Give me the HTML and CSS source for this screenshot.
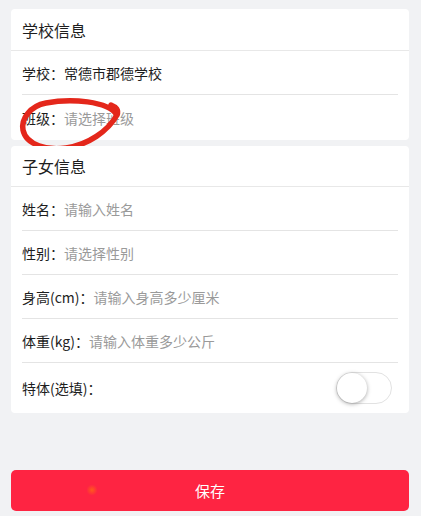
FILE: index.html
```html
<!DOCTYPE html>
<html lang="zh-CN">
<head>
    <meta charset="UTF-8">
    <meta name="viewport" content="width=device-width, initial-scale=1.0">
    <title>学生信息</title>
    <link rel="stylesheet" href="styles.css">
</head>
<body>
    <div class="page">
        <div class="card">
            <div class="card-title">学校信息</div>
            <div class="row">
                <span class="label">学校：</span>
                <span class="value">常德市郡德学校</span>
            </div>
            <div class="row row-tall">
                <span class="label">班级：</span>
                <span class="placeholder">请选择班级</span>
            </div>
            <!-- hand-drawn marker around the class row -->
            <svg class="mark" width="115" height="62" viewBox="0 0 115 62">
                <path d="M101 20 C 92 6, 55 3, 30 8 C 14 11, 5 24, 7 35 C 10 50, 32 56, 50 53 C 72 50, 92 36, 101 20 C 103 15, 100 12, 95 10"
                      fill="none" stroke="#e4271b" stroke-width="5.5" stroke-linecap="round"/>
            </svg>
        </div>

        <div class="card">
            <div class="card-title card-title-sm">子女信息</div>
            <div class="row">
                <span class="label">姓名：</span>
                <span class="placeholder">请输入姓名</span>
            </div>
            <div class="row">
                <span class="label">性别：</span>
                <span class="placeholder">请选择性别</span>
            </div>
            <div class="row">
                <span class="label">身高(cm)：</span>
                <span class="placeholder">请输入身高多少厘米</span>
            </div>
            <div class="row">
                <span class="label">体重(kg)：</span>
                <span class="placeholder">请输入体重多少公斤</span>
            </div>
            <div class="row row-switch">
                <span class="label">特体(选填)：</span>
                <div class="switch"><div class="knob"></div></div>
            </div>
        </div>

        <div class="footer">
            <button class="save-btn">保存<span class="dot"></span></button>
        </div>
    </div>
</body>
</html>
```

FILE: styles.css
```css
body {
    margin: 0;
    font-family: "Noto Sans CJK SC", "Noto Sans", sans-serif;
    background: #f1f2f4;
    color: #333;
}

.page {
    padding: 9px 12px 5px 11px;
    display: flex;
    flex-direction: column;
    gap: 6px;
    height: 516px;
    box-sizing: border-box;
}

.card {
    position: relative;
    background: #fff;
    border-radius: 4px;
}

.card-title {
    height: 41px;
    display: flex;
    align-items: center;
    padding: 0 11px;
    font-size: 16px;
    color: #1e1e1e;
    border-bottom: 1px solid #e8e8e8;
}

.card-title-sm {
    height: 40px;
}

.row {
    height: 43px;
    margin: 0 11px;
    display: flex;
    align-items: center;
    font-size: 14px;
}

.row + .row {
    border-top: 1px solid #e4e4e4;
}

.row-tall {
    height: 45px;
}

.label {
    color: #1e1e1e;
}

.value {
    color: #1e1e1e;
}

.placeholder {
    color: #9a9a9a;
}

.row-switch {
    height: 50px;
    justify-content: space-between;
}

.switch {
    width: 54px;
    height: 30px;
    border: 1px solid #e2e2e2;
    border-radius: 16px;
    background: #fff;
    position: relative;
    margin-right: 6px;
}

.knob {
    position: absolute;
    left: 0;
    top: 0;
    width: 30px;
    height: 30px;
    border-radius: 50%;
    background: #fff;
    box-shadow: 0 1px 4px rgba(0, 0, 0, 0.35);
}

.mark {
    position: absolute;
    left: 5px;
    top: 86px;
}

.footer {
    margin-top: auto;
}

.save-btn {
    position: relative;
    width: 100%;
    height: 41px;
    border: none;
    border-radius: 5px;
    background: #fe2442;
    color: #fff;
    font-family: inherit;
    font-size: 15px;
}

.dot {
    position: absolute;
    left: 75px;
    top: 14px;
    width: 12px;
    height: 12px;
    border-radius: 50%;
    background: radial-gradient(circle, #ff5a1c 0%, rgba(254, 36, 66, 0) 65%);
}
```
